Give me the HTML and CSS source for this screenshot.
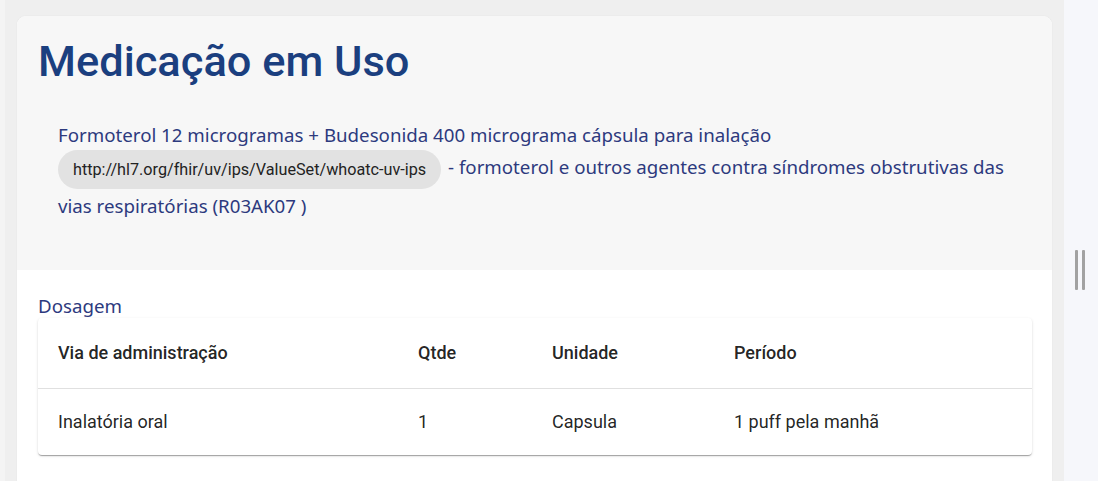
FILE: index.html
```html
<!DOCTYPE html>
<html lang="pt">
<head>
<meta charset="utf-8">
<title>Medicação em Uso</title>
<link rel="stylesheet" href="styles.css">
</head>
<body>
<div class="app">
  <main class="main">
    <section class="card">
      <div class="card-head">
        <h1 class="title">Medicação em Uso</h1>
        <p class="desc">Formoterol 12 microgramas + Budesonida 400 micrograma cápsula para inalação
          <span class="chip">http://hl7.org/fhir/uv/ips/ValueSet/whoatc-uv-ips</span> - formoterol e outros agentes contra síndromes obstrutivas das vias respiratórias (R03AK07 )</p>
      </div>
      <div class="card-body">
        <div class="label">Dosagem</div>
        <div class="paper">
          <table class="table">
            <thead>
              <tr>
                <th class="c1">Via de administração</th>
                <th class="c2">Qtde</th>
                <th class="c3">Unidade</th>
                <th>Período</th>
              </tr>
            </thead>
            <tbody>
              <tr>
                <td>Inalatória oral</td>
                <td>1</td>
                <td>Capsula</td>
                <td>1 puff pela manhã</td>
              </tr>
            </tbody>
          </table>
        </div>
      </div>
    </section>
  </main>
  <aside class="side">
    <div class="handle"><span></span><span></span></div>
  </aside>
</div>
</body>
</html>
```

FILE: styles.css
```css
html, body {
  margin: 0;
  padding: 0;
  height: 100%;
  overflow: hidden;
}
body {
  font-family: Roboto, "Liberation Sans", sans-serif;
}
.app {
  display: flex;
  height: 481px;
}
.main {
  width: 1064px;
  box-sizing: border-box;
  background: #efefef;
  border-left: 5px solid #f4f4f4;
  padding: 16px 12px 0 12px;
}
.card {
  background: #ffffff;
  border-radius: 9px;
  overflow: hidden;
  box-shadow: 0 0 2px rgba(0,0,0,0.06);
  height: 480px;
}
.card-head {
  background: #f7f7f7;
  padding: 20px 21px 48px 21px;
}
.title {
  margin: 0;
  font-family: Roboto, sans-serif;
  font-weight: 500;
  font-size: 43.4px;
  line-height: 52px;
  color: #1b3f7f;
}
.desc {
  margin: 31px 0 0 20px;
  font-family: "Noto Sans", "Open Sans", sans-serif;
  font-size: 18.7px;
  line-height: 32px;
  color: #2d3a7e;
}
.chip {
  display: inline-flex;
  align-items: center;
  height: 39px;
  padding: 0 15px;
  border-radius: 20px;
  background: #e2e2e2;
  color: #222;
  font-family: Roboto, sans-serif;
  font-size: 16.2px;
  line-height: 19px;
  vertical-align: -1px;
  margin: -10px 2px 1px 0;
}
.card-body {
  padding: 24px 20px 0 21px;
}
.label {
  font-family: "Noto Sans", "Open Sans", sans-serif;
  font-size: 18.7px;
  line-height: 24px;
  color: #2d3a7e;
}
.paper {
  background: #fff;
  border-radius: 4px;
  box-shadow: 0 2px 1px -1px rgba(0,0,0,0.2), 0 1px 1px 0 rgba(0,0,0,0.14), 0 1px 3px 0 rgba(0,0,0,0.12);
}
.table {
  width: 100%;
  border-collapse: collapse;
  font-family: Roboto, sans-serif;
  font-size: 18px;
  color: rgba(0,0,0,0.87);
}
.table th {
  text-align: left;
  font-weight: 500;
  height: 70px;
  padding: 0 0 0 20px;
  box-sizing: border-box;
  border-bottom: 1px solid #e0e0e0;
}
.table td {
  height: 66px;
  padding: 0 0 0 20px;
}
.c1 { width: 360px; }
.c2 { width: 134px; }
.c3 { width: 182px; }
.side {
  flex: 1;
  background: #f6f7fb;
  display: flex;
  align-items: center;
  justify-content: center;
}
.handle {
  display: flex;
  gap: 4px;
  margin-left: -2px;
  margin-top: 58px;
}
.handle span {
  width: 3px;
  height: 40px;
  background: #a2a2a2;
  border-radius: 1px;
}
```
